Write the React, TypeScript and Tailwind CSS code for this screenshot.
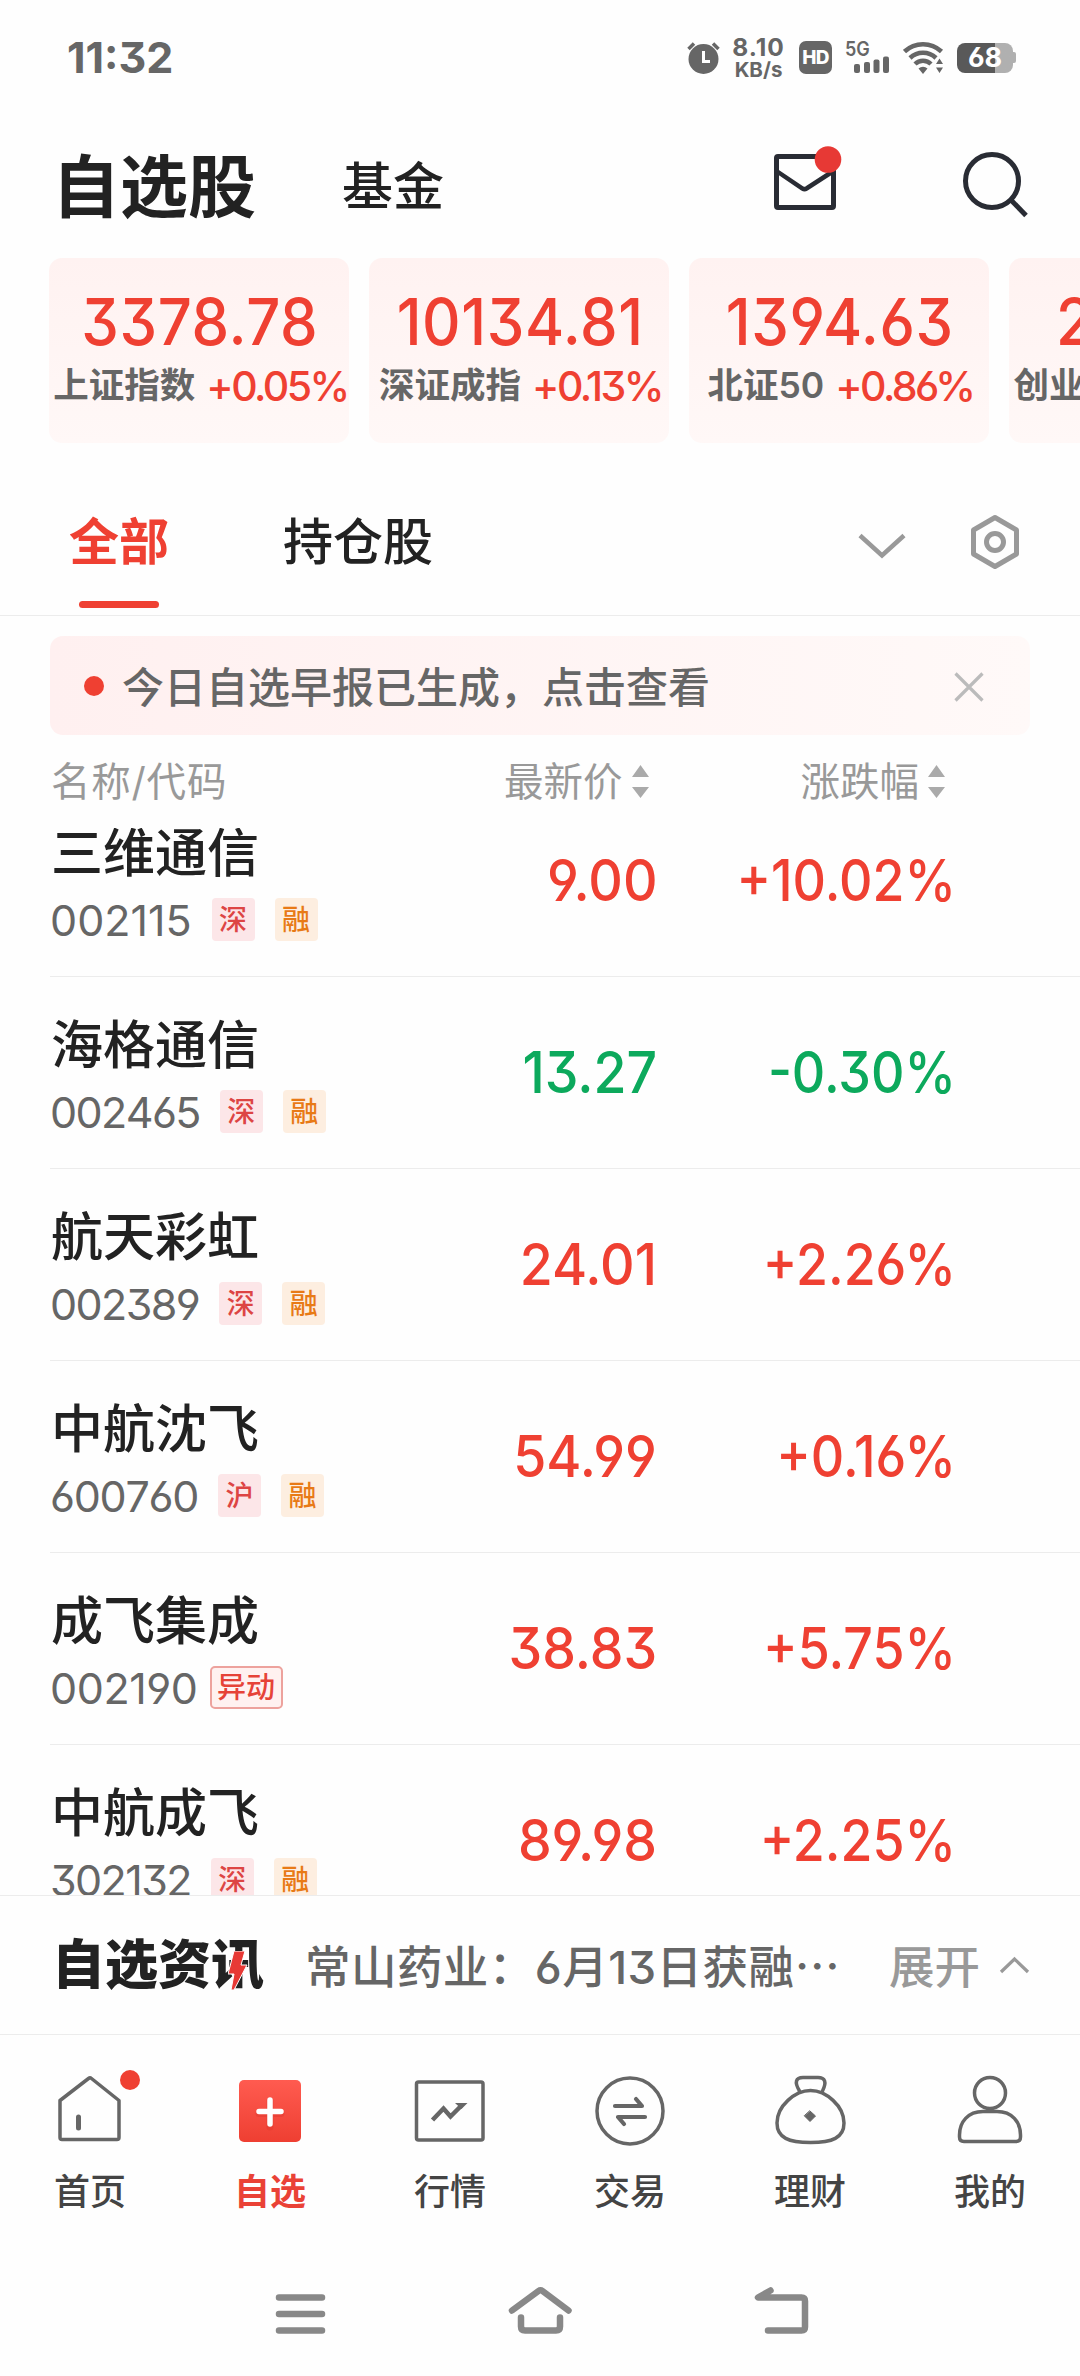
import { Fragment, type ReactNode } from 'react';
import clsx from 'clsx';

type Quote = {
  name: string;
  code: string;
  codeClass?: string;
  price: string;
  change: string;
  tags: string[];
};

const indices = [
  { name: '上证指数', value: '3378.78', change: '+0.05%' },
  { name: '深证成指', value: '10134.81', change: '+0.13%' },
  { name: '北证50', value: '1394.63', change: '+0.86%' },
  { name: '创业板指', value: '2131.51', change: '+0.22%' },
];

const quotes: Quote[] = [
  { name: '三维通信', code: '002115', codeClass: 'tracking-normal', price: '9.00', change: '+10.02%', tags: ['深', '融'] },
  { name: '海格通信', code: '002465', price: '13.27', change: '-0.30%', tags: ['深', '融'] },
  { name: '航天彩虹', code: '002389', price: '24.01', change: '+2.26%', tags: ['深', '融'] },
  { name: '中航沈飞', code: '600760', codeClass: 'tracking-[-0.03em]', price: '54.99', change: '+0.16%', tags: ['沪', '融'] },
  { name: '成飞集成', code: '002190', codeClass: 'tracking-[-0.01em]', price: '38.83', change: '+5.75%', tags: ['异动'] },
  { name: '中航成飞', code: '302132', price: '89.98', change: '+2.25%', tags: ['深', '融'] },
];

const StatusBar = () => (
  <div className="flex h-[115px] items-center justify-between pl-[67px] pr-[64px] text-[#666]">
    <span className="text-[43px] font-bold leading-none">11:32</span>
    <div className="flex items-center">
      <svg className="mr-[12px]" width="33" height="33" viewBox="0 0 33 33" fill="none">
        <circle cx="16.5" cy="18" r="15" fill="currentColor" />
        <path d="M1.5 8 7 2.500M31.500 8 26 2.500" stroke="currentColor" strokeWidth="3.500" />
        <path d="M16.500 10v10.500h6.500" stroke="#fff" strokeWidth="3" />
      </svg>
      <div className="mr-[14px] flex w-[53px] flex-col items-center font-bold">
        <span className="text-[24.500px] leading-[24px] tracking-[0.04em]">8.10</span>
        <span className="text-[20.500px] leading-[22px]">KB/s</span>
      </div>
      <div className="mr-[13px] flex h-[33px] w-[33px] items-center justify-center rounded-[7px] bg-[#666] text-[19px] font-extrabold leading-none tracking-[-0.04em] text-white">
        HD
      </div>
      <div className="relative mr-[13px] h-[33px] w-[45px]">
        <span className="absolute left-0 top-0 origin-left scale-x-90 text-[20px] font-semibold leading-[17px]">5G</span>
        <svg className="absolute bottom-0 left-0" width="45" height="20" viewBox="0 0 45 20" fill="currentColor">
          <rect x="9" y="10" width="6" height="9" rx="2" />
          <rect x="19" y="8" width="6" height="11" rx="2" />
          <rect x="28.500" y="5.500" width="6" height="13.500" rx="2" />
          <rect x="38" y="2.500" width="6" height="16.500" rx="2" />
        </svg>
      </div>
      <svg className="mr-[13px]" width="41" height="33" viewBox="0 0 41 33" fill="none">
        <g stroke="currentColor" strokeWidth="4.500">
          <path d="M1.500 10.500a27 27 0 0 1 37 0" />
          <path d="M7 17a19 19 0 0 1 26 0" />
          <path d="M12 23a11.500 11.500 0 0 1 16 0" />
        </g>
        <path d="M15.500 27.500a7 7 0 0 1 9 0L20 33z" fill="currentColor" />
        <path d="M36 15.500 31 24v8h10v-8z" fill="#fff" />
        <path d="M36.500 17.500 40 23h-7zM36.500 32 40 26.500h-7z" fill="currentColor" />
      </svg>
      <div className="flex items-center">
        <div className="flex h-[30px] w-[56px] items-center justify-center rounded-[8px] bg-linear-to-r from-[#595959] from-68% to-[#b0b0b0] to-68% text-[27px] font-bold leading-none text-white">
          68
        </div>
        <div className="h-[11px] w-[3px] rounded-r-[2px] bg-[#b0b0b0]" />
      </div>
    </div>
  </div>
);

const Header = () => (
  <header className="flex h-[143px] items-center pl-[52px] pr-[52px] text-[#222]">
    <h1 className="text-[68px] font-bold leading-none">自选股</h1>
    <span className="ml-[86px] text-[51px] font-medium leading-none">基金</span>
    <svg className="mb-[17px] ml-auto" width="70" height="64" viewBox="0 0 70 64" fill="none">
      <rect x="4.500" y="10.500" width="57" height="51" rx="1.500" stroke="#292c34" strokeWidth="5" />
      <path d="m4.500 25 26 17.500q2 1.200 4 0L61.500 25" stroke="#292c34" strokeWidth="4.500" />
      <circle cx="56" cy="13.500" r="13.300" fill="#e73935" />
    </svg>
    <svg className="mb-[4px] ml-[120px]" width="66" height="66" viewBox="0 0 66 66" fill="none" stroke="#292c34" strokeWidth="5">
      <circle cx="30" cy="29" r="26.500" />
      <path d="m49 48 15 15.500" />
    </svg>
  </header>
);

const IndexCards = () => (
  <section className="flex gap-5 overflow-hidden pl-[49px]">
    {indices.map((item) => (
      <div
        key={item.name}
        className="flex h-[185px] w-[300px] shrink-0 flex-col items-center rounded-[13px] bg-linear-to-b from-[#fff2f1] to-[#fff8f7] pt-[31px] text-[#ef4032]"
      >
        <span className="scale-x-[0.92] pl-[2px] text-[65px] font-medium leading-[66px] tracking-[0.01em]">{item.value}</span>
        <div className="mt-[11px] flex items-center justify-center gap-[11px] whitespace-nowrap pl-[3px] leading-[40px]">
          <span className="text-[35.500px] font-semibold text-[#666]">{item.name}</span>
          <span className="text-[41px] font-medium tracking-[-0.062em]">{item.change}</span>
        </div>
      </div>
    ))}
  </section>
);

const Tabs = () => (
  <div className="flex h-[173px] items-start border-b border-[#ececec] pl-[69px] pr-[59px] pt-[73px]">
    <div className="flex flex-col items-center text-[#ef4032]">
      <span className="text-[50px] font-bold leading-[52px]">全部</span>
      <div className="mt-[33px] h-[7px] w-[80px] rounded-full bg-[#ef4032]" />
    </div>
    <span className="ml-[114px] text-[50px] font-medium leading-[52px] text-[#222]">持仓股</span>
    <svg className="ml-auto mt-[16px]" width="48" height="27" viewBox="0 0 48 27" fill="none">
      <path d="m2 3.500 22 20 22-20" stroke="#999" strokeWidth="4.500" />
    </svg>
    <svg className="ml-[63px] mt-[-2px]" width="52" height="56" viewBox="0 0 52 56" fill="none" stroke="#999" strokeWidth="5">
      <path d="M26 3.500 47.500 16v24L26 52.500 4.500 40V16z" strokeLinejoin="round" />
      <circle cx="26" cy="28" r="8.500" />
    </svg>
  </div>
);

const Banner = () => (
  <div className="mx-[50px] mt-[20px] flex h-[99px] items-center rounded-[13px] bg-linear-to-r from-[#fff0f0] to-[#fff9f8] pl-[34px] pr-[46px]">
    <div className="h-5 w-5 rounded-full bg-[#ef4032]" />
    <span className="ml-[18px] mt-[4px] text-[42px] font-medium leading-none text-[#666]">今日自选早报已生成，点击查看</span>
    <svg className="ml-auto mt-[3px]" width="30" height="30" viewBox="0 0 30 30" fill="none">
      <path d="m1.500 1.500 27 27m0-27-27 27" stroke="#bbb" strokeWidth="3.200" />
    </svg>
  </div>
);

const SortLabel = ({ children }: { children: ReactNode }) => (
  <div className="flex items-center gap-[9px]">
    <span className="mt-[3px]">{children}</span>
    <svg width="17" height="34" viewBox="0 0 17 34" fill="#aaa">
      <path d="M8.500 0 17 12H0zM8.500 33 17 22H0z" />
    </svg>
  </div>
);

const ListHead = () => (
  <div className="grid h-[93px] grid-cols-[1fr_auto] items-center pl-[51px] pr-[135px] text-[39.500px] leading-none text-[#999]">
    <span className="mt-[3px] tracking-[0.02em]">名称/代码</span>
    <div className="flex gap-[152px]">
      <SortLabel>最新价</SortLabel>
      <SortLabel>涨跌幅</SortLabel>
    </div>
  </div>
);

const Tag = ({ label }: { label: string }) => (
  <span
    className={clsx(
      'flex h-[43px] items-center justify-center font-medium leading-none',
      label === '异动' && '-ml-[8px] w-[73px] rounded-[5px] border-2 border-[#eda29d] bg-[#fff1f0] text-[29px] text-[#e64338]',
      label === '融' && 'w-[43px] rounded-[4px] bg-[#fdeee0] text-[28px] text-[#e87a16]',
      (label === '深' || label === '沪') && 'w-[43px] rounded-[4px] bg-[#fce6e8] text-[28px] text-[#dd4544]'
    )}
  >
    {label}
  </span>
);

const QuoteRow = ({ quote }: { quote: Quote }) => {
  const down = quote.change.startsWith('-');
  return (
    <div className="ml-[50px] flex h-[192px] border-b border-[#ececec]">
      <div className="flex-1 pt-[42px]">
        <div className="pl-px text-[52px] font-medium leading-[54px] text-[#222]">{quote.name}</div>
        <div className="mt-[16px] flex h-[45px] items-center gap-5">
          <span
            className={clsx(
              'mt-[2px] text-[43px] leading-none text-[#666] [font-kerning:none]',
              quote.codeClass ?? 'tracking-[-0.037em]'
            )}
          >
            {quote.code}
          </span>
          {quote.tags.map((t) => (
            <Tag key={t} label={t} />
          ))}
        </div>
      </div>
      <div
        className={clsx(
          'flex pr-[124px] pt-[67px] text-[57px] font-medium leading-[58px]',
          down ? 'text-[#0ca95c]' : 'text-[#ef4032]'
        )}
      >
        <span className="origin-right scale-x-[0.94]">{quote.price}</span>
        <span className="w-[299px] origin-right scale-x-[0.91] text-right">{quote.change}</span>
      </div>
    </div>
  );
};

const NewsBar = () => (
  <div className="flex h-[140px] items-center border-y border-[#ececec] pl-[52px] pr-[50px] leading-none">
    <div className="relative w-[214px] text-[53px] font-black text-[#222]">
      自选资讯
      <svg className="absolute left-[176px] top-[12px]" width="20" height="39" viewBox="0 0 20 39">
        <path d="M6 0h11l-4 14h6L6 39H3l3-16H0z" fill="#e73935" stroke="#fff" strokeWidth="1" />
      </svg>
    </div>
    <span className="ml-[39px] mt-[5px] whitespace-nowrap text-[45.500px] font-medium tracking-[0.01em] text-[#666]">常山药业：6月13日获融⋯</span>
    <span className="ml-auto mt-[5px] text-[45.500px] font-medium text-[#999]">展开</span>
    <svg className="ml-[19px]" width="31" height="18" viewBox="0 0 31 18" fill="none">
      <path d="M2 16 15.500 3 29 16" stroke="#999" strokeWidth="3.200" />
    </svg>
  </div>
);

const navItems: { label: string; icon: ReactNode }[] = [
  {
    label: '首页',
    icon: (
      <Fragment>
        <path d="M10 28.500 38.500 6.500q1.500-1.200 3 0L69 28.500V65.500q0 2-2 2H12q-2 0-2-2z" />
        <path d="M28.500 45v11" strokeWidth="5" />
        <circle cx="80" cy="8" r="10" fill="#ef4032" stroke="none" />
      </Fragment>
    ),
  },
  {
    label: '自选',
    icon: (
      <Fragment>
        <defs>
          <linearGradient id="plusFill" x1="0" y1="0" x2="0" y2="1">
            <stop offset="0" stopColor="#ff5b50" />
            <stop offset="1" stopColor="#ee3f32" />
          </linearGradient>
        </defs>
        <rect x="9" y="8" width="62" height="62" rx="5" fill="url(#plusFill)" stroke="none" />
        <path d="M40 29v26M29 41.500h22" stroke="#d9352b" strokeOpacity=".35" strokeWidth="7" />
        <path d="M40 28v24M29 39.500h22" stroke="#fff" strokeWidth="5.500" />
      </Fragment>
    ),
  },
  {
    label: '行情',
    icon: (
      <Fragment>
        <rect x="6.500" y="10" width="66.500" height="58" rx="2" />
        <path d="m22.500 48 11-11.500 7 8L51 34" strokeWidth="4.500" strokeLinecap="butt" strokeLinejoin="miter" />
        <path d="M45 31h12.500L51.500 37z" fill="#666" stroke="none" />
      </Fragment>
    ),
  },
  {
    label: '交易',
    icon: (
      <Fragment>
        <circle cx="40" cy="39" r="33" />
        <path d="M25 34h27l-6-7M55 45H28l6 7" strokeWidth="4.200" />
      </Fragment>
    ),
  },
  {
    label: '理财',
    icon: (
      <Fragment>
        <path d="M40.500 18.500C56 18.500 74 34 74 51 74 66 62 70.500 40.500 70.500S7 66 7 51C7 34 25 18.500 40.500 18.500z" />
        <path d="M29.500 19C24 10 26 5.500 33 5.500h15c7 0 9 4.500 4.500 13.500" />
        <path d="m40 39 5.500 5L40 49.500 34.500 44z" fill="#666" strokeWidth="1" />
      </Fragment>
    ),
  },
  {
    label: '我的',
    icon: (
      <Fragment>
        <circle cx="40" cy="21" r="15.500" />
        <path d="M33 39.500h14C62 39.500 70.500 50 70.500 63v2q0 4.500-4.500 4.500H14q-4.500 0-4.500-4.500v-2C9.500 50 18 39.500 33 39.500z" />
      </Fragment>
    ),
  },
];

const TabBar = () => (
  <nav className="grid h-[200px] grid-cols-6 pt-[37px]">
    {navItems.map(({ label, icon }) => {
      const active = label === '自选';
      return (
        <div key={label} className="flex w-[180px] flex-col items-center">
          <svg
            className="overflow-visible"
            width="80"
            height="76"
            viewBox="0 0 80 76"
            fill="none"
            stroke="#666"
            strokeWidth="3.500"
            strokeLinecap="round"
            strokeLinejoin="round"
          >
            {icon}
          </svg>
          <span
            className={clsx(
              'mt-[24px] text-[36px] leading-[40px]',
              active ? 'font-bold text-[#ea4236]' : 'font-medium text-[#444]'
            )}
          >
            {label}
          </span>
        </div>
      );
    })}
  </nav>
);

const SystemNav = () => (
  <div className="flex flex-1 justify-center gap-[172px] pt-[46px] text-[#888]">
    <svg width="68" height="60" viewBox="0 0 68 60" fill="none" stroke="currentColor" strokeWidth="6.500" strokeLinecap="round">
      <path d="M13 16.500h43M13 33h43M13 49.500h43" />
    </svg>
    <svg width="68" height="60" viewBox="0 0 68 60" fill="none" stroke="currentColor" strokeWidth="6.500" strokeLinecap="round" strokeLinejoin="round">
      <path d="M6 29.500 32.500 10q2-1.500 4 0L62.500 29.500" />
      <path d="M15 36.500v9q0 4 4 4h31q4 0 4-4v-9" />
    </svg>
    <svg width="68" height="60" viewBox="0 0 68 60" fill="none" stroke="currentColor" strokeWidth="6.500" strokeLinecap="round" strokeLinejoin="round">
      <path d="M24.500 9.500 12 16.500h43.500q3.500 0 3.500 3.500v26q0 3.500-3.500 3.500H22" />
    </svg>
  </div>
);

export default function App() {
  return (
    <div className="flex h-[2376px] w-[1080px] flex-col overflow-hidden bg-[#fefefe] font-['Inter','Noto_Sans_CJK_SC',sans-serif] [font-feature-settings:'cv03','cv04','cv09']">
      <StatusBar />
      <Header />
      <IndexCards />
      <Tabs />
      <Banner />
      <ListHead />
      <div className="h-[1067px] overflow-hidden">
        <div className="-mt-[43px]">
          {quotes.map((q) => (
            <QuoteRow key={q.code} quote={q} />
          ))}
        </div>
      </div>
      <NewsBar />
      <TabBar />
      <SystemNav />
    </div>
  );
}
